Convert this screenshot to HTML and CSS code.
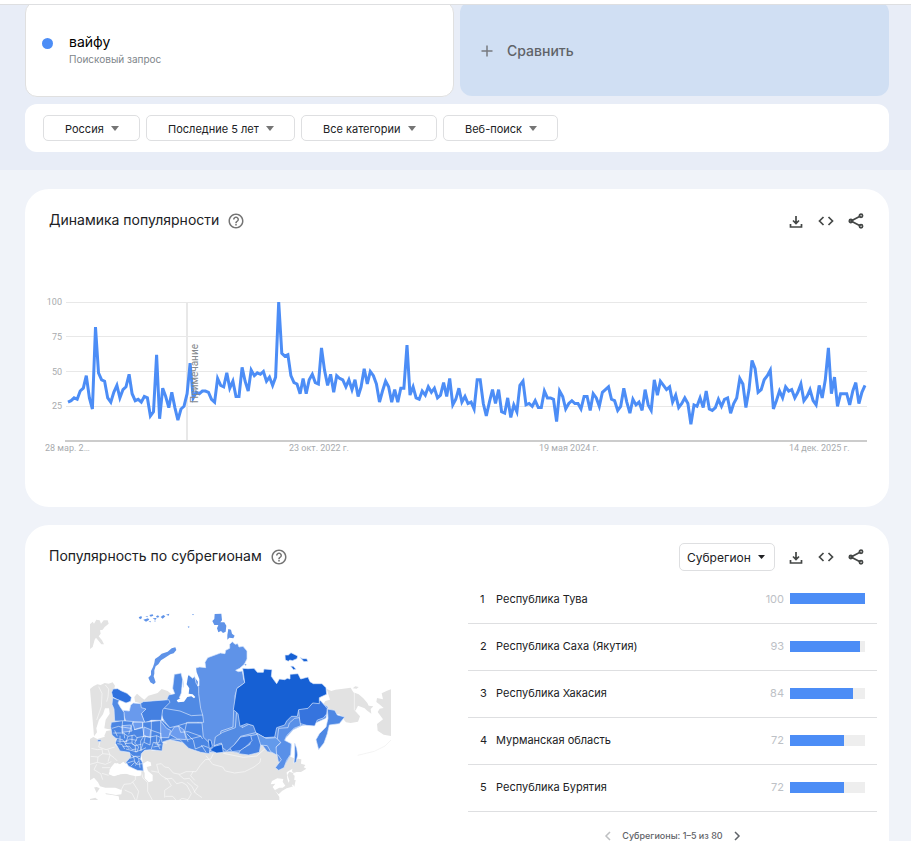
FILE: index.html
```html
<!DOCTYPE html>
<html lang="ru">
<head>
  <meta charset="UTF-8" />
  <meta name="viewport" content="width=device-width, initial-scale=1.0" />
  <title>вайфу</title>
  <link rel="stylesheet" href="styles.css">
</head>
<body>
  <svg class="sprite" aria-hidden="true">
    <symbol id="i-help" viewBox="0 0 24 24"><path d="M11 18h2v-2h-2v2zm1-16C6.480 2 2 6.480 2 12s4.480 10 10 10 10-4.480 10-10S17.520 2 12 2zm0 18c-4.410 0-8-3.590-8-8s3.590-8 8-8 8 3.590 8 8-3.590 8-8 8zm0-14c-2.210 0-4 1.790-4 4h2c0-1.100.9-2 2-2s2 .9 2 2c0 2-3 1.750-3 5h2c0-2.250 3-2.500 3-5 0-2.210-1.790-4-4-4z"/></symbol>
    <symbol id="i-download" viewBox="0 0 16 16"><path d="M8 3v7M5 7.500l3 3 3-3M2.500 11v3h11v-3"/></symbol>
    <symbol id="i-code" viewBox="0 0 16 16"><path d="M5.500 4 1.500 8l4 4M10.500 4l4 4-4 4"/></symbol>
    <symbol id="i-share" viewBox="0 0 16 16"><path d="M12.500 3 3 8l9.500 5"/><circle cx="13" cy="2.800" r="1.600"/><circle cx="2.900" cy="8" r="1.600"/><circle cx="13" cy="13.200" r="1.600"/></symbol>
  </svg>

  <div class="topbar"></div>

  <div class="hero">
    <div class="terms">
      <div class="term">
        <span class="dot"></span>
        <div>
          <div class="term-name">вайфу</div>
          <div class="term-type">Поисковый запрос</div>
        </div>
      </div>
      <button class="compare" type="button">
        <svg width="12" height="12" viewBox="0 0 12 12" aria-hidden="true"><path d="M6 0.500v11M0.500 6h11"/></svg>
        Сравнить
      </button>
    </div>

    <div class="filters">
      <select class="filter" aria-label="Регион"><option>Россия</option></select>
      <select class="filter" aria-label="Период"><option>Последние 5 лет</option></select>
      <select class="filter" aria-label="Категория"><option>Все категории</option></select>
      <select class="filter" aria-label="Тип поиска"><option>Веб-поиск</option></select>
    </div>
  </div>

  <main class="content">
    <section class="card">
      <div class="card-head">
        <h2>Динамика популярности</h2>
        <button class="help" type="button" aria-label="Справка"><svg><use href="#i-help"/></svg></button>
        <div class="actions">
          <button type="button" aria-label="Скачать"><svg><use href="#i-download"/></svg></button>
          <button type="button" aria-label="Встроить"><svg><use href="#i-code"/></svg></button>
          <button type="button" aria-label="Поделиться"><svg><use href="#i-share"/></svg></button>
        </div>
      </div>
      <svg class="chart" viewBox="0 0 824 164">
        <path class="grid" d="M21 10.500H822M21 44.500H822M21 79.500H822M21 114.500H822"/>
        <path class="note-line" d="M142 10V149"/>
        <path class="axis" d="M20 149H822"/>
        <polyline id="trend" points=""/>
        <g text-anchor="end">
          <text x="17" y="13">100</text>
          <text x="17" y="48">75</text>
          <text x="17" y="83">50</text>
          <text x="17" y="117">25</text>
        </g>
        <text x="0" y="159">28 мар. 2…</text>
        <text x="244" y="159">23 окт. 2022 г.</text>
        <text x="494" y="159">19 мая 2024 г.</text>
        <text x="744" y="159">14 дек. 2025 г.</text>
        <text class="note" transform="translate(153 111) rotate(-90)">Примечание</text>
      </svg>
    </section>

    <section class="card">
      <div class="card-head">
        <h2>Популярность по субрегионам</h2>
        <button class="help" type="button" aria-label="Справка"><svg><use href="#i-help"/></svg></button>
        <div class="actions">
          <select class="level" aria-label="Уровень"><option>Субрегион</option></select>
          <button type="button" aria-label="Скачать"><svg><use href="#i-download"/></svg></button>
          <button type="button" aria-label="Встроить"><svg><use href="#i-code"/></svg></button>
          <button type="button" aria-label="Поделиться"><svg><use href="#i-share"/></svg></button>
        </div>
      </div>

      <div class="regions">
        <div class="map">
          <svg viewBox="30 21 903 564" role="img" aria-label="Карта субрегионов">
            <!-- neighbouring countries -->
            <g class="land">
              <path d="M30 58l8-8 4 6 7-12 10 2 4 10 8-10 12 0 3 10-12 10-6 8-8 2 2 10-6 8 10 12 6 12-8 0-8-10-8-10-4 6-6 22-8 6z"/>
              <path d="M30 252l10-8 12-6 10 2 12-6 12 2 12-4 7 10-2 8 10 6-10 10 2 30 0 50-6 22 2 20 4 4-10 8-16 2-6-10 6-14 20-4-16-2-10-2 4-26 12-18-2-16-12 0-6 18-12 16-8 26 2 12-9 12z"/>
              <path d="M165 290l-2-14 8-10 14 12 8 6 12-12 28-8 12-12 18 6 10 8-10 20-55 4-20 6z"/>
              <path d="M30 402l10-6 12 6 20-6 20-10 16 14-2 20 16 16 26 6 4 18-14 16-12 6-14-8-14 14-10 6 4 10 6 8 14-2 20-6 18 6 18 4 14-2 4-20 2-22-4-22 4-10 20-4 16 4 18-4 8-24 18-8 26-4 18 6 28 22 32 12 24-8 32 6 26-10 30-2 24-8 40 6 20-30 24 6 14 26 14 26 22 10-2 30-20 12 2 20 6 18-8 8-12-18 2-8-18-2-16 8-4 10 14-2-8 10 10 14 10 16 0 20-6 14H30v-28l16-4 12 10 22 6 24 4 14-12-2-12-20-4-18-2-6-14-12-6-10 16-8-18-12-10z"/>
              <path d="M640 475l14-14 10 2-2 26-14 12-12-2zM628 500l12 4 0 22-10 6-8-22zM636 490l20-16 20 6-10 14-22 4zM635 501l18-8 12-10 14 8-16 10-14 0zM635 514l-6 6zM637 535l2-9 8-1-4 20zM640 533l-4 9 3 5-8-4zM584 556l14-8 10 0 14-10 12-18 2-14 8 6-2 20-8 14-14 4-14 8-10 10-4-4zM638 486l14 6 10-2-14 12-8 2z"/>
              <path d="M740 252l14 6 12-4 18-2 28-4 8 14 16 6 14 12 12 14 4 8 14 2-8 8 2 14-14-10-6-6-20-8-8 16 14 16-6 16-22 4-14-2-20-24-34 0-12-16-2-14 6-10 14-4z"/>
              <path d="M933 253v140l-22-4-18-12-2-20 18-14-16-22 6-10 12-2-14-12-8-6 2-12 18 4-4-18 16-8z"/>
              <path d="M818 250l8-6 10 2-6 5z"/>
              <path class="thin" d="M833 451l50-12 32-16 18-18"/>
            </g>
            <g class="sea">
              <path d="M92 488l12-14 16 4 10-8 8 8 2 12 20 10 4 10-24-4-20 2-18 6-16-6z"/>
              <path d="M186 478l16-10 10 4 2 10-14 4 4 12 14 12 0 18-12 4-12-12 0-16-8-14z"/>
              <path d="M30 526l12-8 12 14 6 12 16 4 30 0 20 8-2 12-16 2-34-6-10-12-14-6-20 4z"/>
            </g>
            <g class="borders">
              <path d="M56 245l10 20-2 40-14 40M76 240l10 12-2 24-4 14M60 410l-4 16 22 8 26-8M34 430l18 4 14-2 2 14-14 10-22-2M68 446l20 2 14 10 10 10M54 456l-2 16 24 6 18-8M30 478l22-6M50 478l-8 16 20 12 6 18M66 488l24 0M84 434l6 16-6 20M66 505l20 6M185 505l4 14 14 14 0 26 14 26M152 498l14 8 0 18-14 12-20 2-10 20M134 555l22 10 10 20M158 531l18 28-6 26M214 498l22 4-6-24 14-2 10 10 12 2 14 16 20 4 18-8 30 0 12-18 16-18 16-2 8-16M236 502l8 10 18 10 12 20-20 14 0 22M254 522l22-2 14 16 16-4 14 8 14 26-10 18-18-4-14 10-14-16-22 0M296 508l16 14 16-2 14 16 12 8-12 18M322 532l14 12 10 20 20 14M340 498l-8 14 12 14M378 452l20 26 30 8 8 12 28 6 30-4 28-14 18-14 2-12M430 445l60 12 40-4 30-26"/>
              <path d="M823 258v56l18 18"/>
            </g>

            <!-- northern islands -->
            <g fill="#5f93e8">
              <path d="M176 37l8-4 2 6-6 4zM190 44l14-4 4 4-10 6zM208 30l10-2 2 4-8 3zM218 40l12-1-4 6zM196 34l8 0-2 3zM228 34l6-3 4 5-7 2zM242 36l8-6 6 4-8 7zM258 29l10-3-2 6zM222 47l6 0-3 3zM206 50l6-2 0 4z"/>
              <path d="M404 27l20-1 2 20-5 6 12 0 6 10-2 18-8 4-6-6-8 4-4-12 4-10-12 0-6-12 6-6zM445 72l8 2 3 12 8 6-4 8-12-2-6 6 0-14z"/>
              <path d="M286 127l3 8-8 10-10 3-16 10-12 8-8 12-8 6-4 12 0 10-2 8 6 18-6 6-10-6-6-14 8-8 0-12 6-12 4-12 2-12 12-8 8-8 18-6 12-10z"/>
              <path d="M323 64l6 1-3 4zM336 27l6 1-3 3z"/>
            </g>

            <g class="ru">
              <path fill="#5a90e6" d="M250 300L300 285 362 285 372 200 480 200 480 240 690 250 720 290 744 306 738 340 700 357 665 362 640 374 618 398 612 410 634 420 632 450 615 480 595 470 590 445 562 440 545 418 530 435 500 448 455 440 400 442 370 440 340 420 250 400z"/>
              <path fill="#5f93e8" d="M345 190l14-4 18 2-2-16 8-14 22-8 16-6 14 2 2-10 12-6 0-12 8-8 8 8 8-2 4 10 12-2 12 14 0 24-8 16-14 12-12 6 8 4 12-2 4 24 4 12-22 14-8 24 2 40-6 4-2 50-36 12-6 30-20 26-16 2-8-14-3-22-22-4-2-30 12-20-8-40-6-50z"/>
              <path fill="#538be3" d="M470 318l14 0 2 50 20-10 18 4 6 20-48 12-24 32-18 12-12-10-4-14-22 8 4-26 22-14 38-14z"/>
              <path fill="#508ae4" d="M283 208l12-2 8-2 5 20-2 20-2 20-6 14 6 4 12-2 4-20-10-14 2-20 14-16 12 10 6-6 4 20 8 12 0 20 6 44 6 20-4 16-36-8-34-12-34 0-14-18 12-18 8-20 18-4-6-16z"/>
              <path fill="#4b86e3" d="M246 308l18 4 36 6 34 14 34-2 3 22-48 0-12 22-18-8-22 6-22-30-6-18z"/>
              <path fill="#4480e1" d="M190 290l76-6 4 8-22 22-4 32-30 0-20 8-8-22-4-22-14-6z"/>
              <path fill="#699aed" d="M152 300l8-6 22 2 2 12 14 4-14 14 10 26-56 0-6-20-2-16 18 2z"/>
              <path fill="#2f71de" d="M95 262l4-10 14-1 10 6 18 8 13 12-2 12-14 5-14-6-12-4-14-8z"/>
              <path fill="#508ae4" d="M98 278l20 8-4 8 8 14 10 14 2 28-30-2-2-36-6-14z"/>
              <path fill="#4b86e3" d="M94 352l34-5 62 5 56-6 24 22 24-6 26-8 46 0 4 42 22 22-4 28-26-4-36-12-26-26-24-2-26 8-4 28-34-4-18 2-10 10-2 16 6 12 2 24-18-2-26-12-8-12 14-16-4-14-28-4-14-24 4-12-14-12-4-26z"/>
              <path fill="#6c9cee" d="M242 348l18 22 12 6-6 22-24 0zM283 366l14-2 14 10 8 30-26-2-24-14z"/>
              <path fill="#6c9cee" d="M126 362l26-2 4 18-30 4zM158 352l30 0 0 16-24 6zM192 366l20 8-2 22-20-2z"/>
              <path fill="#1660d4" d="M390 436l12-12 24-6 4 24-20 2zM385 404l8 2 4 18-9 8z"/>
              <path fill="#3674de" d="M655 308l37-8 10-13 20 0 20 24-2 16-10 12-18 6-8 18-24-2-22-6 0-20z"/>
              <path fill="#4e88e4" d="M742 312l22 4 8 14 22 6-16 20-30 4-6 26-10 28-16 20-8-30 10-18 20-20 6-26z"/>
              <path fill="#5990e8" d="M658 338l4 24-20 8-22 22-6 14 20 10-2 32-12 18-8 22-16 8-10-8 18-24-8-12-12-8 4-18 14-12-10-12 4-32 28-2 4-14 16-14z"/>
              <path fill="#1660d4" d="M470 251l24-18-6-43 16 1 18-1 10 12 18 0 2-10 24 2-2 20 10 14 6 8 8-14 16 2 8-4 8 2 0-14 24-2 8 16 22-6 6 14 10 6 26 0 12 12 2 20-22 10 0 18-20-2-14 16-28 4-4 20-18 0-14 14-6 12-24 8-6 28-30 2-26-14-8-22-20-6-20 8-6-38-14-12z"/>
              <path fill="#639aeb" d="M530 384l28 16 30-2 14 14-14 14 2 24-18-10-10-18-24-2z"/>
              <path fill="#4682e2" d="M512 392l20-4 10 32-4 22-32 8-30-4 6-12 28-16z"/>
              <path fill="#3a78df" d="M482 396l30-5 4 16-16 16-20 14-24 3-6-10 14-12z"/>
              <path fill="#4480e1" d="M644 414l6 16 3 20-5 22-6 2 2-26z"/>
              <path fill="#1660d4" d="M615 150l10 0 8-7 12 6 8 4-2 8-14 6-8-2-4 4-9-4zM660 157l8 4 12 0 4 8-12 1zM632 183l8 1 8 9-8 1zM493 176l6 2-2 5z"/>
              <path fill="#4480e1" d="M52 405l10-1 2 5-10 1z"/>
            </g>

            <!-- gulfs of the Kara sea -->
            <path class="sea" d="M308 196l4 12 0 30-4 22-4 18-14 8 4 6 18-2 10-14 12-2 8 6 4-4-8-8-12-2 2-16-8-12 4-24-2-16zM324 190l6 14 10-4 6 20 8 10-2 14 6-2 0-20-8-20-2-14z"/>

            <g class="borders">
              <path d="M96 370l20-6 12 4 0 20M128 348l-2 18 26 4 8-20M152 370l-6 18M162 374l26-8 0-14M188 366l4 26 20 6M214 346l0 30 30 10M214 376l-4 44M192 392l-10 16 0 26M100 384l30 0 14 10 20-4 6 8 22-4M108 400l20 4 8 12 18-2 10 8 20-4M112 416l14 2 8 14M120 392l0 22M144 394l-8 24 12 14M156 390l0 26 10 6 0 20M172 398l-8 16 12 12-6 16M132 384l2 16M148 402l22 4M136 408l12-4M128 424l20 0 8 10 14-2M196 392l-4 20 18 8M210 396l20-4 12 6-6 16-16-2-6 20M242 386l4 26 14 2M230 392l0 20 10 20M224 416l20 4M220 426l20-4M190 412l-8 24 16-8M104 376l8 18M112 408l30 2M138 432l30 8 18-6M150 460l16-6 18 10M142 474l18-6 12 10 16-2M160 452l6 24M166 482l10-14M176 460l4 28M152 484l10-10M148 444l12 10 20 0M296 364l6 18 22-2M320 352l-6 28 10 30M324 380l40 14M320 386l20 20M322 404l40-10 6 8M340 406l6 26 24-10 16 6M364 420l14 22"/>
            </g>
          </svg>
        </div>

        <div class="list">
          <table>
            <tr><td class="rank">1</td><td>Республика Тува</td><td class="value">100</td><td class="bar-cell"><div class="bar"><div style="width: 100%"></div></div></td></tr>
            <tr><td class="rank">2</td><td>Республика Саха (Якутия)</td><td class="value">93</td><td class="bar-cell"><div class="bar"><div style="width: 93%"></div></div></td></tr>
            <tr><td class="rank">3</td><td>Республика Хакасия</td><td class="value">84</td><td class="bar-cell"><div class="bar"><div style="width: 84%"></div></div></td></tr>
            <tr><td class="rank">4</td><td>Мурманская область</td><td class="value">72</td><td class="bar-cell"><div class="bar"><div style="width: 72%"></div></div></td></tr>
            <tr><td class="rank">5</td><td>Республика Бурятия</td><td class="value">72</td><td class="bar-cell"><div class="bar"><div style="width: 72%"></div></div></td></tr>
          </table>
          <div class="pager">
            <button type="button" aria-label="Назад" disabled><svg viewBox="0 0 8 10"><path d="M6 1 2 5l4 4"/></svg></button>
            <span>Субрегионы: 1–5 из 80</span>
            <button type="button" aria-label="Далее"><svg viewBox="0 0 8 10"><path d="M2 1l4 4-4 4"/></svg></button>
          </div>
        </div>
      </div>
    </section>
  </main>

  <script src="chart.js"></script>
</body>
</html>
```
FILE: styles.css
```css
* {
  box-sizing: border-box;
}

body {
  margin: 0;
  height: 100vh;
  overflow: hidden;
  background: #f0f3f9;
  color: #202124;
  font-family: Inter, "Liberation Sans", sans-serif;
  font-size: 11px;
}

button, select {
  margin: 0;
  padding: 0;
  border: 0;
  background: none;
  color: inherit;
  font-family: inherit;
  cursor: pointer;
}

.sprite {
  display: none;
}

.topbar {
  position: relative;
  z-index: 1;
  height: 5px;
  background: #fff;
  border-bottom: 1px solid #dedfe1;
}

.hero {
  background: #e8edf7;
  padding: 0 22px 18px 25px;
}

.terms {
  display: grid;
  grid-template-columns: 1fr 1fr;
  gap: 6px;
  margin-top: -4px;
  padding-bottom: 7px;
}

.term {
  display: flex;
  align-items: center;
  gap: 16px;
  height: 96px;
  padding: 0 16px;
  background: #fff;
  border: 1px solid #e0e0e0;
  border-radius: 12px;
}

.dot {
  width: 11px;
  height: 11px;
  margin-bottom: 12px;
  border-radius: 50%;
  background: #4c8df6;
}

.term-name {
  color: #000;
  font-size: 14px;
  line-height: 20px;
}

.term-type {
  color: #80868b;
  font-size: 10px;
  line-height: 14px;
}

.compare {
  display: flex;
  align-items: center;
  gap: 14px;
  height: 95px;
  padding: 4px 21px 0;
  border-radius: 12px;
  background: #d0dff3;
  color: #5f6368;
  font-size: 14px;
  font-weight: 500;
}

.compare path {
  stroke: #777b80;
  stroke-width: 1.5;
}

.filters {
  display: flex;
  flex-wrap: wrap;
  gap: 6px;
  padding: 11px 18px;
  background: #fff;
  border-radius: 12px;
}

.filter, .level {
  appearance: none;
  border: 1px solid #dedfe1;
  border-radius: 5px;
  background: url("data:image/svg+xml,%3Csvg xmlns='http://www.w3.org/2000/svg' width='8' height='5'%3E%3Cpath d='M0 0h8L4 5z' fill='%23757575'/%3E%3C/svg%3E") no-repeat right 20px center;
}

.filter {
  height: 26px;
  padding: 1px 35px 0 21px;
  font-size: 11px;
}

.content {
  padding: 19px 22px 0 25px;
}

.card {
  margin-bottom: 18px;
  padding: 16px 0 51px;
  background: #fff;
  border-radius: 24px;
}

.card-head {
  display: flex;
  align-items: center;
  height: 32px;
  padding: 0 18px 0 24px;
}

h2 {
  margin: 0;
  padding-bottom: 3px;
  font-size: 14px;
  font-weight: 400;
}

.help {
  display: flex;
  margin-left: 8px;
}

.help svg {
  width: 18px;
  height: 18px;
  fill: #757575;
}

.actions {
  display: flex;
  align-items: center;
  margin-left: auto;
}

.actions button {
  display: flex;
  align-items: center;
  justify-content: center;
  width: 30px;
  height: 30px;
}

.actions svg {
  width: 16px;
  height: 16px;
  fill: none;
  stroke: #444746;
  stroke-width: 1.7;
}

.level {
  height: 28px;
  margin-right: 6px;
  padding: 0 23px 0 7px;
  background-image: url("data:image/svg+xml,%3Csvg xmlns='http://www.w3.org/2000/svg' width='7' height='4'%3E%3Cpath d='M0 0h7L3.5 4z' fill='%23202124'/%3E%3C/svg%3E");
  background-position: right 9px center;
  font-size: 12px;
}

/* trend chart */
.chart {
  display: block;
  width: calc(100% - 40px);
  margin: 55px 20px 0;
}

.chart text {
  fill: #a8abae;
  font-family: Roboto, sans-serif;
  font-size: 9px;
}

.chart .note {
  fill: #85898d;
  font-size: 10px;
}

.chart .grid {
  stroke: #e8e8e8;
}

.chart .note-line {
  stroke: #e8e8e8;
  stroke-width: 2;
}

.chart .axis {
  stroke: #ccc;
  stroke-width: 2;
}

.chart polyline {
  fill: none;
  stroke: #4c8df6;
  stroke-width: 3;
}

/* regions */
.regions {
  display: grid;
  grid-template-columns: 443fr 421fr;
  margin-top: 3px;
}

.map {
  padding: 36px 77px 0 65px;
}

.map svg {
  display: block;
  width: 100%;
}

.land {
  fill: #e2e2e2;
}

.land .thin {
  fill: none;
  stroke: #eee;
  stroke-width: 2;
}

.sea {
  fill: #fff;
}

.ru {
  stroke: #dce8fc;
  stroke-width: 2;
  stroke-linejoin: round;
}

.borders {
  fill: none;
  stroke: #fff;
  stroke-opacity: 0.8;
  stroke-width: 2;
}

.list {
  padding-right: 12px;
}

table {
  width: 100%;
  border-collapse: collapse;
}

td {
  height: 47px;
  padding: 0 0 1px;
  border-bottom: 1px solid #dedfe1;
}

.rank {
  width: 28px;
  padding-left: 12px;
}

.value {
  width: 40px;
  padding-right: 6px;
  color: #bdc1c6;
  text-align: right;
}

.bar-cell {
  width: 87px;
  padding-right: 12px;
}

.bar {
  height: 11px;
  background: #eee;
}

.bar div {
  height: 100%;
  background: #4c8df6;
}

.pager {
  display: flex;
  align-items: center;
  justify-content: center;
  gap: 10px;
  padding-top: 17px;
  color: #5f6368;
  font-size: 9px;
  font-weight: 500;
  line-height: 14px;
}

.pager button {
  display: flex;
}

.pager svg {
  width: 8px;
  height: 10px;
  fill: none;
  stroke: #5f6368;
  stroke-width: 1.5;
}

.pager button:disabled {
  opacity: 0.4;
}

@media (max-width: 700px) {
  .regions {
    grid-template-columns: 1fr;
  }
}
```
FILE: chart.js
```js
const values = [
  28, 29, 31, 30, 36, 38, 47, 31, 23, 82, 49, 44, 43, 31, 28, 35, 40, 31, 37, 39,
  48, 34, 29, 30, 28, 32, 31, 18, 21, 62, 16, 38, 32, 24, 35, 24, 15, 23, 25, 34,
  56, 31, 35, 34, 36, 36, 35, 30, 28, 45, 40, 39, 49, 38, 43, 32, 32, 53, 43, 36,
  51, 47, 49, 48, 50, 43, 46, 40, 46, 100, 63, 61, 62, 47, 42, 41, 34, 45, 34, 44,
  48, 42, 41, 67, 51, 40, 48, 35, 47, 45, 44, 39, 44, 37, 44, 32, 39, 52, 41, 50,
  47, 41, 28, 36, 43, 39, 28, 37, 28, 38, 38, 69, 33, 39, 31, 30, 36, 33, 39, 35,
  38, 31, 33, 42, 32, 45, 26, 30, 38, 28, 32, 27, 28, 23, 44, 44, 27, 18, 28, 37,
  27, 37, 21, 20, 31, 17, 26, 21, 40, 43, 26, 27, 25, 29, 24, 24, 36, 31, 31, 30,
  14, 36, 32, 23, 27, 29, 27, 27, 23, 32, 32, 22, 34, 31, 25, 35, 37, 39, 30, 29,
  22, 25, 38, 28, 20, 30, 26, 28, 22, 37, 26, 22, 44, 33, 43, 40, 37, 39, 28, 33,
  24, 27, 31, 27, 12, 26, 25, 31, 24, 36, 23, 22, 24, 30, 25, 30, 31, 20, 27, 31,
  45, 41, 24, 37, 58, 52, 35, 37, 44, 47, 51, 23, 29, 36, 31, 39, 36, 37, 31, 35,
  41, 29, 32, 37, 29, 26, 40, 31, 44, 67, 34, 46, 25, 34, 34, 34, 26, 36, 42, 27,
  35, 40
];

// plot area: x 23..820, y 149 (0) .. 10 (100)
const step = 797 / (values.length - 1);
const points = values.map((v, i) => (23 + i * step).toFixed(1) + "," + (149 - v * 1.39).toFixed(1));
document.getElementById("trend").setAttribute("points", points.join(" "));
```
